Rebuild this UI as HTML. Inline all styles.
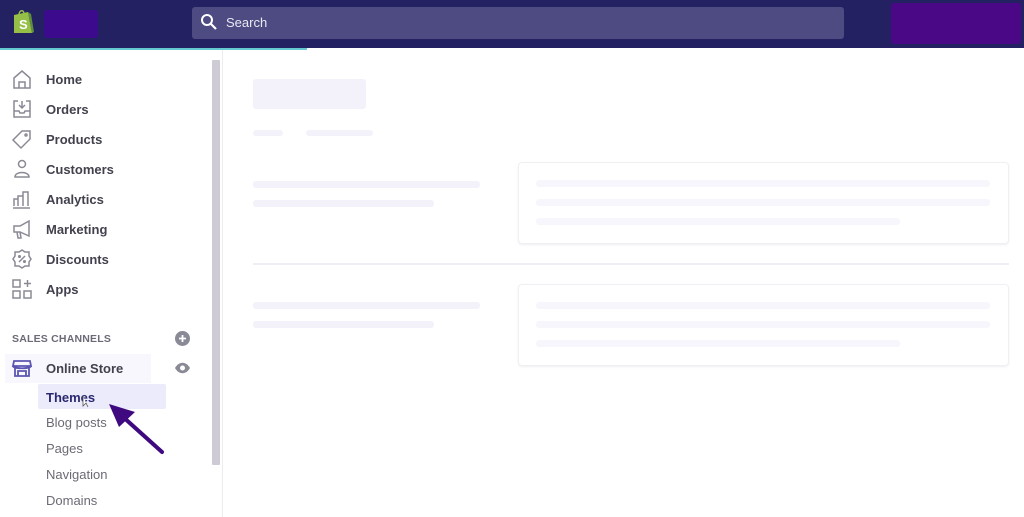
<!DOCTYPE html>
<html><head><meta charset="utf-8"><style>
*{margin:0;padding:0;box-sizing:border-box}
body{width:1024px;height:517px;overflow:hidden;background:#fff;font-family:"Liberation Sans",sans-serif;position:relative}
.a{position:absolute}
.hdr{left:0;top:0;width:1024px;height:48px;background:#232162}
.sk{position:absolute;background:#f3f2fa;border-radius:3px}
.nav{position:absolute;left:46px;font-size:13px;font-weight:bold;color:#42424e}
.sub{position:absolute;left:46px;font-size:13px;color:#6b6b75}
.ic{position:absolute;left:11px;width:22px;height:22px}
.card{position:absolute;left:518px;width:491px;height:82px;border:1px solid #f0eff4;border-radius:4px;box-shadow:0 1px 2px #eeedf2}
</style></head><body>
<div class="a hdr"></div>
<svg class="a" style="left:11px;top:8px" width="24" height="28" viewBox="0 0 24 28"><path d="M3 7 L17 4 L21 25 L3 25 Z" fill="#95bf47"/><path d="M17 4 L21 25 L23 24 L20 6Z" fill="#5e8e3e"/><path d="M8 7 C8 2 13 1 13 6" stroke="#95bf47" fill="none" stroke-width="1.5"/><text x="8" y="21" font-size="13" font-weight="bold" fill="#fff" font-family="Liberation Sans">S</text></svg>
<div class="a" style="left:44px;top:10px;width:54px;height:28px;background:#3c0a8c;border-radius:3px"></div>
<div class="a" style="left:192px;top:7px;width:652px;height:32px;background:#4e4b82;border-radius:3px"></div>
<svg class="a" style="left:200px;top:13px" width="18" height="18" viewBox="0 0 18 18"><circle cx="7" cy="7" r="5" stroke="#fff" stroke-width="2" fill="none"/><path d="M11 11 L16 16" stroke="#fff" stroke-width="2.2"/></svg>
<div class="a" style="left:226px;top:15px;font-size:13px;color:#e9e8f3">Search</div>
<div class="a" style="left:891px;top:3px;width:130px;height:41px;background:#4a0886;border-radius:3px"></div>
<div class="a" style="left:0;top:48px;width:307px;height:2px;background:#63c8d0"></div>
<div class="a" style="left:222px;top:50px;width:1px;height:467px;background:#ecebf0"></div>
<div class="a" style="left:212px;top:60px;width:8px;height:405px;background:#cfcbd4;border-radius:1px"></div>

<svg class="ic" style="top:68px" viewBox="0 0 22 22" fill="none" stroke="#8a8a96" stroke-width="1.5"><path d="M3 10 L11 3 L19 10 V20 H3Z"/><path d="M8 20 V14 H14 V20"/></svg>
<div class="nav" style="top:72px">Home</div>
<svg class="ic" style="top:98px" viewBox="0 0 22 22" fill="none" stroke="#8a8a96" stroke-width="1.5"><path d="M7 3 H3 V19 H19 V3 H15"/><path d="M3 13 H8 L9 15 H13 L14 13 H19"/><path d="M11 3 V10 M8 7 L11 10 L14 7"/></svg>
<div class="nav" style="top:102px">Orders</div>
<svg class="ic" style="top:128px" viewBox="0 0 22 22" fill="none" stroke="#8a8a96" stroke-width="1.5"><path d="M2 12 L11 3 H19 V11 L10 20 Z"/><circle cx="15" cy="7" r="1"/></svg>
<div class="nav" style="top:132px">Products</div>
<svg class="ic" style="top:158px" viewBox="0 0 22 22" fill="none" stroke="#8a8a96" stroke-width="1.5"><circle cx="11" cy="6" r="3.5"/><path d="M4 19 C4 13 18 13 18 19 Z"/></svg>
<div class="nav" style="top:162px">Customers</div>
<svg class="ic" style="top:188px" viewBox="0 0 22 22" fill="none" stroke="#8a8a96" stroke-width="1.5"><path d="M3 18 V11 H7 V18 M7 18 V8 H12 V18 M12 18 V4 H17 V18 M2 20 H19"/></svg>
<div class="nav" style="top:192px">Analytics</div>
<svg class="ic" style="top:218px" viewBox="0 0 22 22" fill="none" stroke="#8a8a96" stroke-width="1.5"><path d="M3 8 H9 L18 3 V18 L9 14 H3 Z M6 14 L7 20 H10 L9 14"/></svg>
<div class="nav" style="top:222px">Marketing</div>
<svg class="ic" style="top:248px" viewBox="0 0 22 22" fill="none" stroke="#8a8a96" stroke-width="1.5"><path d="M11 2 L14 4 L18 4 L18 8 L20 11 L18 14 L18 18 L14 18 L11 20 L8 18 L4 18 L4 14 L2 11 L4 8 L4 4 L8 4Z"/><path d="M8 14 L14 8"/><circle cx="8.5" cy="8.5" r=".8"/><circle cx="13.5" cy="13.5" r=".8"/></svg>
<div class="nav" style="top:252px">Discounts</div>
<svg class="ic" style="top:278px" viewBox="0 0 22 22" fill="none" stroke="#8a8a96" stroke-width="1.5"><rect x="2" y="2" width="7" height="7"/><rect x="2" y="13" width="7" height="7"/><rect x="13" y="13" width="7" height="7"/><path d="M16.5 2 V9 M13 5.5 H20"/></svg>
<div class="nav" style="top:282px">Apps</div>

<div class="a" style="left:12px;top:333px;font-size:10.5px;font-weight:bold;color:#6b6b78;letter-spacing:.2px">SALES CHANNELS</div>
<svg class="a" style="left:175px;top:331px" width="15" height="15" viewBox="0 0 15 15"><circle cx="7.5" cy="7.5" r="7.5" fill="#8a8a96"/><path d="M7.5 4 V11 M4 7.5 H11" stroke="#fff" stroke-width="1.8"/></svg>
<div class="a" style="left:5px;top:354px;width:146px;height:29px;background:#f8f7fd"></div>
<svg class="ic" style="top:357px" viewBox="0 0 22 22" fill="none" stroke="#5a55b0" stroke-width="1.8"><path d="M3 4 H19 L20 9 H2 Z M2 9 C2 12 20 12 20 9 M4 11 V19 H18 V11 M7 19 V14 H15 V19"/></svg>
<div class="nav" style="top:361px">Online Store</div>
<svg class="a" style="left:174px;top:362px" width="17" height="12" viewBox="0 0 17 12"><path d="M1 6 C5 -1 12 -1 16 6 C12 13 5 13 1 6Z" fill="#8a8a96"/><circle cx="8.5" cy="6" r="2.5" fill="#fff"/></svg>
<div class="a" style="left:38px;top:384px;width:128px;height:25px;background:#ecebfb;border-radius:2px"></div>
<div class="nav" style="top:390px;color:#2a2870">Themes</div>
<div class="sub" style="top:415px">Blog posts</div>
<div class="sub" style="top:441px">Pages</div>
<div class="sub" style="top:467px">Navigation</div>
<div class="sub" style="top:493px">Domains</div>
<svg class="a" style="left:80px;top:392px" width="90" height="66" viewBox="80 392 90 66"><path d="M162 452 L122 416" stroke="#3f0a80" stroke-width="4" stroke-linecap="round"/><path d="M109 404 L135 412 L119 427 Z" fill="#3f0a80"/><path d="M83 396 V406 L86 403 L88 407" stroke="#555" fill="#fff" stroke-width=".8"/></svg>

<div class="sk" style="left:253px;top:79px;width:113px;height:30px"></div>
<div class="sk" style="left:253px;top:130px;width:30px;height:6px"></div>
<div class="sk" style="left:306px;top:130px;width:67px;height:6px"></div>
<div class="sk" style="left:253px;top:181px;width:227px;height:7px"></div>
<div class="sk" style="left:253px;top:200px;width:181px;height:7px"></div>
<div class="card" style="top:162px"></div>
<div class="sk" style="left:536px;top:180px;width:454px;height:7px;background:#f7f6fc"></div>
<div class="sk" style="left:536px;top:199px;width:454px;height:7px;background:#f7f6fc"></div>
<div class="sk" style="left:536px;top:218px;width:364px;height:7px;background:#f7f6fc"></div>
<div class="a" style="left:253px;top:263px;width:756px;height:2px;background:#efeef2"></div>
<div class="sk" style="left:253px;top:302px;width:227px;height:7px"></div>
<div class="sk" style="left:253px;top:321px;width:181px;height:7px"></div>
<div class="card" style="top:284px"></div>
<div class="sk" style="left:536px;top:302px;width:454px;height:7px;background:#f7f6fc"></div>
<div class="sk" style="left:536px;top:321px;width:454px;height:7px;background:#f7f6fc"></div>
<div class="sk" style="left:536px;top:340px;width:364px;height:7px;background:#f7f6fc"></div>
</body></html>
